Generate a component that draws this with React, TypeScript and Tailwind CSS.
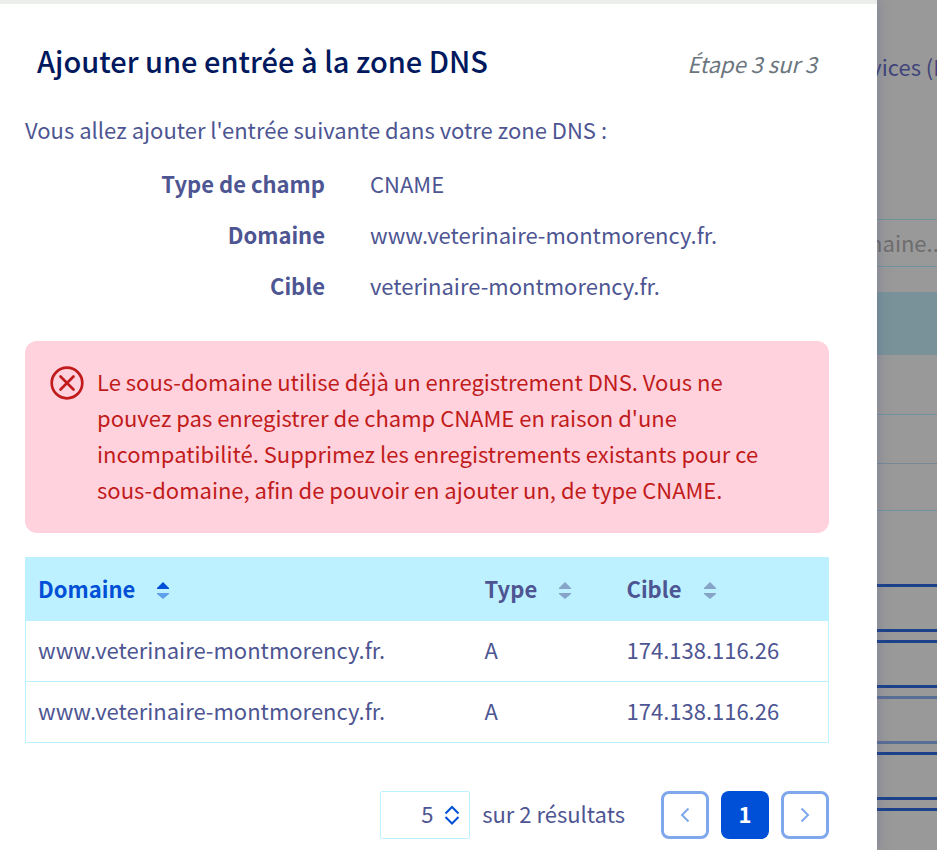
import { useState } from "react";

const records = [
  { domain: "www.veterinaire-montmorency.fr.", type: "A", target: "174.138.116.26" },
  { domain: "www.veterinaire-montmorency.fr.", type: "A", target: "174.138.116.26" },
];

const fields = [
  { label: "Type de champ", value: "CNAME" },
  { label: "Domaine", value: "www.veterinaire-montmorency.fr." },
  { label: "Cible", value: "veterinaire-montmorency.fr." },
];

function SortIcon({ active = false }) {
  return (
    <svg className="mt-1" width="12" height="17" viewBox="0 0 12 17" fill="currentColor" aria-hidden="true">
      <path d="M6 0L12 6V7H0V6Z" opacity={active ? 1 : 0.5} />
      <path d="M0 11H12V12L6 17L0 12Z" opacity="0.5" />
    </svg>
  );
}

function SortHeader({ label, active = false }) {
  return (
    <th className="h-[63px] px-3 pb-0.5 text-left font-bold">
      <button
        className={
          active
            ? "flex items-center gap-[22px] text-[#0050d7]"
            : "flex items-center gap-[22px] text-[#4d5592]"
        }
      >
        {label}
        <SortIcon active={active} />
      </button>
    </th>
  );
}

function ErrorAlert() {
  return (
    <div
      role="alert"
      className="mt-[38px] flex gap-3 rounded-xl bg-[#ffd2dd] pb-[26px] pl-6 pr-12 pt-[22px] text-[#c11b1b]"
    >
      <svg
        className="mt-0.5 shrink-0"
        width="36"
        height="36"
        viewBox="0 0 36 36"
        fill="none"
        stroke="currentColor"
        strokeWidth="2.7"
        strokeLinecap="round"
        aria-hidden="true"
      >
        <circle cx="18" cy="18" r="15.3" />
        <path d="M11.5 11.5L24.5 24.5M24.5 11.5L11.5 24.5" />
      </svg>
      <p>
        Le sous-domaine utilise déjà un enregistrement DNS. Vous ne pouvez pas
        enregistrer de champ CNAME en raison d'une incompatibilité. Supprimez
        les enregistrements existants pour ce sous-domaine, afin de pouvoir en
        ajouter un, de type CNAME.
      </p>
    </div>
  );
}

function Pagination() {
  const [pageSize, setPageSize] = useState("5");

  return (
    <div className="mt-12 flex items-center justify-end">
      <div className="relative">
        <select
          id="page-size"
          aria-label="Résultats par page"
          value={pageSize}
          onChange={(e) => setPageSize(e.target.value)}
          className="block h-12 w-[90px] appearance-none rounded-xs border border-[#bef1ff] bg-white pb-1 pl-10"
        >
          <option>5</option>
          <option>10</option>
          <option>25</option>
        </select>
        <svg
          className="pointer-events-none absolute right-2.5 top-3.5"
          width="16"
          height="20"
          viewBox="0 0 16 20"
          fill="none"
          stroke="#0050d7"
          strokeWidth="2"
          aria-hidden="true"
        >
          <path d="M1.5 8.5L8 2L14.5 8.5M1.5 12L8 18.5L14.5 12" />
        </svg>
      </div>
      <label htmlFor="page-size" className="ml-3 mr-9 pb-1">
        sur 2 résultats
      </label>
      <nav className="flex gap-3">
        <button
          aria-label="Page précédente"
          className="flex size-12 items-center justify-center rounded-lg border-3 border-[#7fa7eb] text-[#7fa7eb]"
        >
          <svg width="10" height="16" viewBox="0 0 10 16" fill="none" stroke="currentColor" strokeWidth="2">
            <path d="M8.5 1.5L2 8L8.5 14.5" />
          </svg>
        </button>
        <button className="size-12 rounded-lg bg-[#0050d7] pb-1 font-bold text-white">
          1
        </button>
        <button
          aria-label="Page suivante"
          className="flex size-12 items-center justify-center rounded-lg border-3 border-[#7fa7eb] text-[#7fa7eb]"
        >
          <svg width="10" height="16" viewBox="0 0 10 16" fill="none" stroke="currentColor" strokeWidth="2">
            <path d="M1.5 1.5L8 8L1.5 14.5" />
          </svg>
        </button>
      </nav>
    </div>
  );
}

// Strip of the dimmed page that stays visible beside the panel
function DimmedPage() {
  return (
    <aside
      aria-hidden="true"
      className="w-[60px] shrink-0 overflow-hidden bg-[#999999] text-[#40447a]"
    >
      <p className="mt-12 flex justify-center whitespace-nowrap pr-1">vices (I</p>
      <div className="mt-[135px] flex h-12 items-center justify-center whitespace-nowrap border-y border-[#6f939d] pb-0.5 text-[#6d6d6d]">
        naine...
      </div>
      <div className="mt-[25px] h-[63px] bg-[#799299]" />
      <div className="h-[60px] border-b border-[#6f939d]" />
      <div className="h-[49px] border-b border-[#788896]" />
      <div className="h-[47px] border-b border-[#6f939d]" />
      <div className="mt-[73px] flex flex-col gap-2">
        <div className="h-12 border-y-3 border-[#1a418a]" />
        <div className="h-12 border-y-3 border-[#1a418a]" />
        <div className="h-12 border-y-3 border-[#596e94]" />
        <div className="h-12 border-y-3 border-[#1a418a]" />
        <div className="h-12 border-y-3 border-[#1a418a]" />
      </div>
    </aside>
  );
}

function App() {
  return (
    <div className="flex h-screen overflow-hidden font-['Noto_Sans_CJK_JP',sans-serif] text-[22px] leading-9 text-[#4d5592]">
      <main className="relative min-w-0 flex-1 overflow-y-auto border-t-4 border-[#eceeeb] bg-white pb-2 pl-[25px] pr-12 shadow-[0_0_12px_#4d559259]">
        <header className="flex items-baseline justify-between px-3 pt-[38px]">
          <h1 className="text-[29px] font-medium text-[#00185e]">
            Ajouter une entrée à la zone DNS
          </h1>
          <span className="italic text-[#6c767e]">Étape 3 sur 3</span>
        </header>

        <p className="mt-[30px]">
          Vous allez ajouter l'entrée suivante dans votre zone DNS :
        </p>

        <dl className="mt-[18px] flex flex-col gap-[15px]">
          {fields.map((field) => (
            <div key={field.label} className="flex gap-[45px]">
              <dt className="w-[300px] text-right font-bold">{field.label}</dt>
              <dd>{field.value}</dd>
            </div>
          ))}
        </dl>

        <ErrorAlert />

        <table className="mt-6 w-full table-fixed border-collapse border border-[#bef1ff]">
          <colgroup>
            <col />
            <col className="w-[142px]" />
            <col className="w-[214px]" />
          </colgroup>
          <thead className="bg-[#bef1ff]">
            <tr>
              <SortHeader label="Domaine" active />
              <SortHeader label="Type" />
              <SortHeader label="Cible" />
            </tr>
          </thead>
          <tbody>
            {records.map((record, index) => (
              <tr key={index} className="border-b border-[#bef1ff]">
                <td className="h-[61px] px-3 pb-1">{record.domain}</td>
                <td className="px-3 pb-1">{record.type}</td>
                <td className="px-3 pb-1">{record.target}</td>
              </tr>
            ))}
          </tbody>
        </table>

        <Pagination />
      </main>
      <DimmedPage />
    </div>
  );
}

export default App;
